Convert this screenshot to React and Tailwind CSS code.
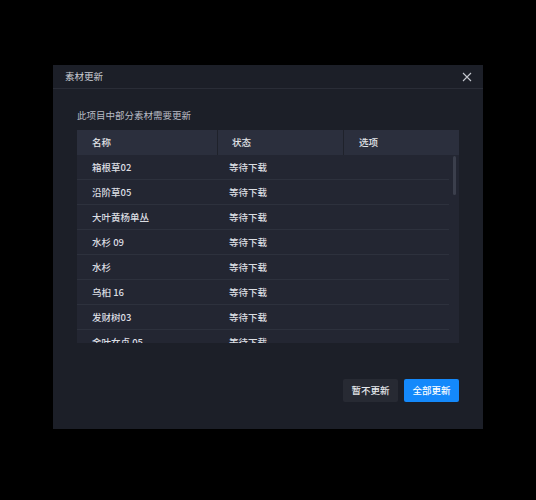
import React from 'react';

const rows = [
  '箱根草02',
  '沿阶草05',
  '大叶黄杨单丛',
  '水杉 09',
  '水杉',
  '乌桕 16',
  '发财树03',
  '金叶女贞 05',
];

const App = () => {
  return (
    <div
      className="w-[536px] h-[500px] bg-black pt-[65px]"
      style={{ fontFamily: '"Noto Sans CJK SC", "Noto Sans", sans-serif' }}
    >
      <div className="mx-auto w-[430px] h-[364px] bg-[#1c1f28] flex flex-col">
        {/* header */}
        <div className="h-[24px] border-b border-[#2a2d37] flex items-center justify-between pl-[12px] pr-[11px]">
          <span className="text-[9.5px] text-[#c9ccd3]">素材更新</span>
          <svg width="10" height="10" viewBox="0 0 10 10" className="text-[#c4c7ce]">
            <path d="M1 1L9 9M9 1L1 9" stroke="currentColor" strokeWidth="1.1" />
          </svg>
        </div>

        <div className="flex flex-col px-[24px]">
          <p className="mt-[19px] h-[14px] leading-[14px] text-[9.5px] text-[#b9bcc5]">此项目中部分素材需要更新</p>

          {/* table */}
          <div className="mt-[8px] w-[382px]">
            <div className="h-[25px] bg-[#2b2f3d] flex text-[9.5px] font-medium text-[#e4e6ea]">
              <div className="w-[141px] border-r border-[#1f222b] flex items-center pl-[15px]">名称</div>
              <div className="w-[126px] border-r border-[#1f222b] flex items-center pl-[14px]">状态</div>
              <div className="flex-1 flex items-center pl-[15px]">选项</div>
            </div>
            <div className="relative h-[188px] overflow-hidden bg-[#232632]">
              <div className="w-[372px]">
                {rows.map((name) => (
                  <div
                    key={name}
                    className="h-[25px] border-b border-[#2d313d] flex items-center pl-[15px] text-[9.5px] font-medium text-[#dcdee3]"
                  >
                    <div className="w-[137px]">{name}</div>
                    <div>等待下载</div>
                  </div>
                ))}
              </div>
              <div className="absolute right-[3px] top-[1px] w-[3px] h-[39px] rounded-full bg-[#3b3f4c]" />
            </div>
          </div>

          {/* footer */}
          <div className="mt-[36px] flex justify-end gap-[6px]">
            <button className="w-[55px] h-[23px] rounded-[2px] bg-[#272a33] text-[9.5px] font-medium text-[#e6e8ec]">暂不更新</button>
            <button className="w-[55px] h-[23px] rounded-[2px] bg-[#1489fb] text-[9.5px] font-medium text-white">全部更新</button>
          </div>
        </div>
      </div>
    </div>
  );
};

export default App;
